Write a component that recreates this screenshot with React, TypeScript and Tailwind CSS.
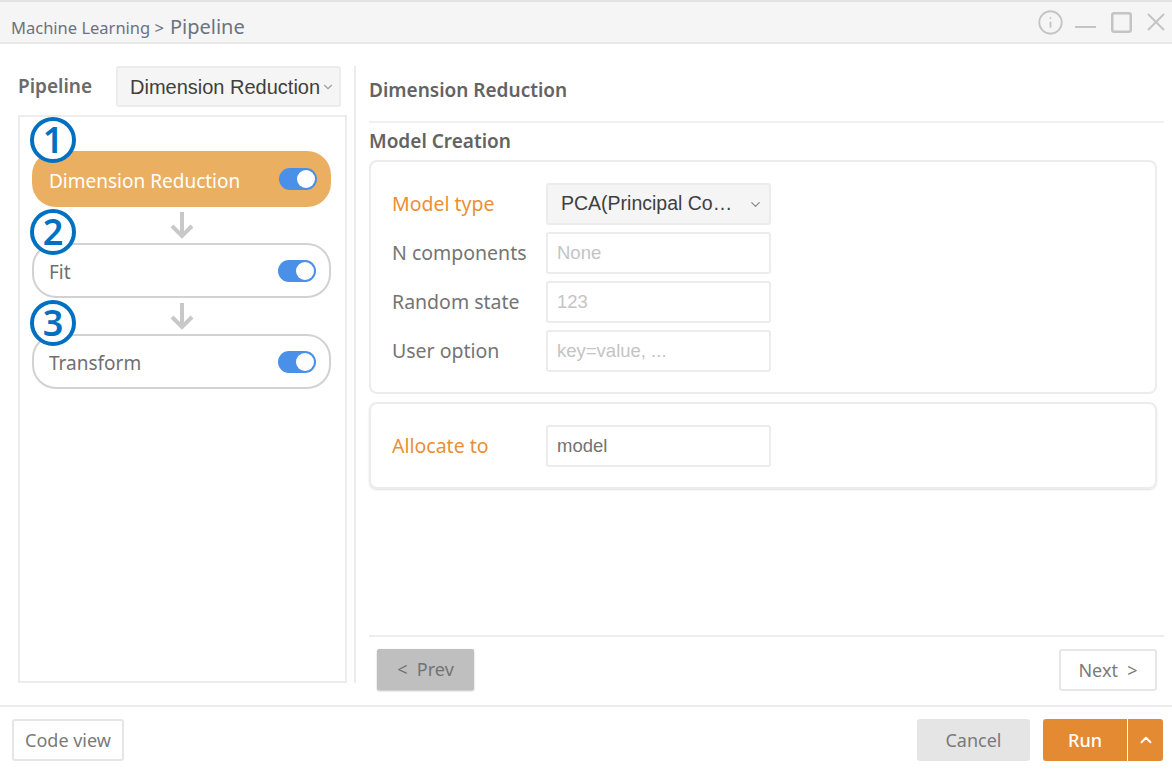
import { ChevronDown, ChevronUp, Info } from 'lucide-react'

const steps = [
  { n: '1', name: 'Dimension Reduction', active: true },
  { n: '2', name: 'Fit', active: false },
  { n: '3', name: 'Transform', active: false },
]

const fields = [
  { label: 'N components', placeholder: 'None' },
  { label: 'Random state', placeholder: '123' },
  { label: 'User option', placeholder: 'key=value, ...' },
]

const inputCls =
  "flex h-[42px] w-[225px] items-center rounded-[3px] border-2 border-[#ececec] bg-white px-[9px] font-['Liberation_Sans',sans-serif] text-[18.5px]"

function Toggle() {
  return (
    <div className="flex h-[22px] w-[38px] items-center justify-end rounded-full bg-[#4a90e8] pr-[2px]">
      <div className="h-[18px] w-[18px] rounded-full bg-white" />
    </div>
  )
}

function FlowArrow() {
  return (
    <svg width="24" height="27" viewBox="0 0 24 27" fill="none" stroke="#c8c8c8" strokeWidth="4">
      <path d="M12 0V24" />
      <path d="M2 14L12 24L22 14" />
    </svg>
  )
}

function Step({ n, name, active }: { n: string; name: string; active: boolean }) {
  return (
    <div
      className={
        active
          ? 'relative flex h-[56px] items-center justify-between rounded-[24px] bg-[#ebaf61] pl-[17px] pr-[14px] text-white'
          : 'relative flex h-[55px] items-center justify-between rounded-[24px] border-2 border-[#d2d2d2] bg-white pl-[15px] pr-[13px] text-[#6f6f6f]'
      }
    >
      <span className="pt-[4px] text-[19px] leading-none">{name}</span>
      <Toggle />
      <div
        className={
          active
            ? 'absolute left-[-2px] top-[-34px] flex h-[46px] w-[46px] items-center justify-center rounded-full border-[4px] border-[#0070c0] bg-white text-[36px] font-semibold leading-none text-[#0070c0]'
            : 'absolute left-[-4px] top-[-36px] flex h-[46px] w-[46px] items-center justify-center rounded-full border-[4px] border-[#0070c0] bg-white text-[36px] font-semibold leading-none text-[#0070c0]'
        }
      >
        {n}
      </div>
    </div>
  )
}

export default function App() {
  return (
    <div className="flex h-[771px] w-[1172px] flex-col overflow-hidden bg-white font-['Noto_Sans',sans-serif] text-[#6f6f6f]">
      {/* Title bar */}
      <header className="flex h-[44px] shrink-0 items-center justify-between border-b-2 border-t-2 border-b-[#e8e8e8] border-t-[#e2e2e2] bg-[#f5f5f5] pl-[11px] pr-[7px]">
        <div className="flex items-baseline pt-[10px] text-[#6b7280]">
          <span className="text-[16.5px]">Machine Learning &gt;</span>
          <span className="ml-[6px] text-[20px]">Pipeline</span>
        </div>
        <div className="flex items-center text-[#c4c4c4]">
          <Info className="h-[27px] w-[27px]" strokeWidth={1.6} />
          <svg className="ml-[11px]" width="21" height="21" viewBox="0 0 21 21" stroke="currentColor" strokeWidth="2">
            <path d="M0 15H21" />
          </svg>
          <svg className="ml-[15px]" width="21" height="21" viewBox="0 0 21 21" fill="none" stroke="currentColor" strokeWidth="2.5">
            <rect x="1.25" y="1.25" width="18.5" height="18.5" rx="2" />
          </svg>
          <svg className="ml-[15px]" width="18" height="18" viewBox="0 0 18 18" stroke="currentColor" strokeWidth="2">
            <path d="M1 1L17 17M17 1L1 17" />
          </svg>
        </div>
      </header>

      {/* Body */}
      <main className="flex min-h-0 flex-1">
        <aside className="flex w-[354px] shrink-0 flex-col pb-[22px] pl-[18px] pr-[7px] pt-[22px]">
          <div className="flex h-[41px] shrink-0 items-center justify-between">
            <span className="text-[19px] font-semibold text-[#6a6a6a]">Pipeline</span>
            <div className="mr-[6px] flex h-[41px] w-[225px] items-center rounded-[3px] border-2 border-[#ececec] bg-[#f5f5f5] pl-[12px] font-['Liberation_Sans',sans-serif] text-[20px] text-[#404040]">
              <span className="whitespace-nowrap">Dimension Reduction</span>
              <ChevronDown className="ml-[1px] h-[14px] w-[14px] shrink-0 text-[#a0a0a0]" />
            </div>
          </div>
          <div className="mt-[8px] flex flex-1 flex-col border-2 border-[#ececec] pl-[12px] pr-[14px] pt-[34px]">
            {steps.map((s, i) => (
              <div key={s.n}>
                {i > 0 && (
                  <div className="flex h-[36px] items-center justify-center">
                    <FlowArrow />
                  </div>
                )}
                <Step {...s} />
              </div>
            ))}
          </div>
        </aside>

        <section className="mb-[22px] mt-[22px] flex min-w-0 flex-1 flex-col border-l-2 border-[#ececec] pl-[13px] pr-[8px]">
          <h2 className="flex h-[57px] shrink-0 items-center border-b-2 border-[#f0f0f0] pb-[6px] text-[19px] font-semibold text-[#636363]">
            Dimension Reduction
          </h2>
          <h3 className="flex h-[37px] shrink-0 items-center text-[19px] font-semibold text-[#636363]">Model Creation</h3>

          <div className="mr-[7px] flex h-[234px] shrink-0 flex-col gap-[7px] rounded-[8px] border-2 border-[#ececec] pl-[21px] pt-[21px]">
            <div className="flex items-center">
              <span className="w-[154px] text-[19.5px] text-[#ea8f34]">Model type</span>
              <div className="flex h-[42px] w-[225px] items-center justify-between rounded-[3px] border-2 border-[#ececec] bg-[#f5f5f5] pl-[13px] pr-[6px] font-['Liberation_Sans',sans-serif] text-[19.5px] text-[#404040]">
                <span className="whitespace-nowrap">PCA(Principal Co…</span>
                <ChevronDown className="h-[15px] w-[15px] text-[#8a8a8a]" />
              </div>
            </div>
            {fields.map((f) => (
              <div key={f.label} className="flex items-center">
                <span className="w-[154px] text-[19.5px] text-[#747474]">{f.label}</span>
                <div className={inputCls + ' text-[#c4c4c4]'}>{f.placeholder}</div>
              </div>
            ))}
          </div>

          <div className="mr-[7px] mt-[8px] flex h-[87px] shrink-0 items-center rounded-[8px] border-2 border-[#ececec] pl-[21px] shadow-[0_1px_2px_rgba(0,0,0,0.12)]">
            <span className="w-[154px] text-[19.5px] text-[#ea8f34]">Allocate to</span>
            <div className={inputCls + ' text-[#737373]'}>model</div>
          </div>

          <div className="mb-[-8px] mt-auto border-t-2 border-[#ececec] pl-[8px] pr-[7px] pt-[12px]">
            <div className="flex items-start justify-between">
              <button className="flex h-[41px] w-[97px] items-center justify-center rounded-[2px] bg-[#bfbfbf] text-[18px] text-[#737373] shadow-[0_1px_2px_rgba(0,0,0,0.25)]">
                &lt;&nbsp; Prev
              </button>
              <button className="flex h-[42px] w-[98px] items-center justify-center rounded-[3px] border-2 border-[#e6e6e6] bg-white text-[18px] text-[#7a7a7a]">
                Next &nbsp;&gt;
              </button>
            </div>
          </div>
        </section>
      </main>

      {/* Footer */}
      <footer className="flex h-[66px] shrink-0 items-start justify-between border-t-2 border-[#ececec] pl-[12px] pr-[9px] pt-[12px]">
        <button className="flex h-[42px] w-[112px] items-center justify-center rounded-[3px] border-2 border-[#e6e6e6] bg-white text-[18px] text-[#7a7a7a]">
          Code view
        </button>
        <div className="flex items-center">
          <button className="flex h-[42px] w-[113px] items-center justify-center rounded-[3px] bg-[#e5e5e5] text-[18px] text-[#7a7a7a]">
            Cancel
          </button>
          <button className="ml-[13px] flex h-[42px] w-[84px] items-center justify-center rounded-l-[3px] bg-[#e38a33] text-[18px] font-medium text-white">
            Run
          </button>
          <button className="ml-[1px] flex h-[42px] w-[35px] items-center justify-center rounded-r-[3px] bg-[#e38a33] text-white">
            <ChevronUp className="h-[18px] w-[18px]" strokeWidth={2.5} />
          </button>
        </div>
      </footer>
    </div>
  )
}
